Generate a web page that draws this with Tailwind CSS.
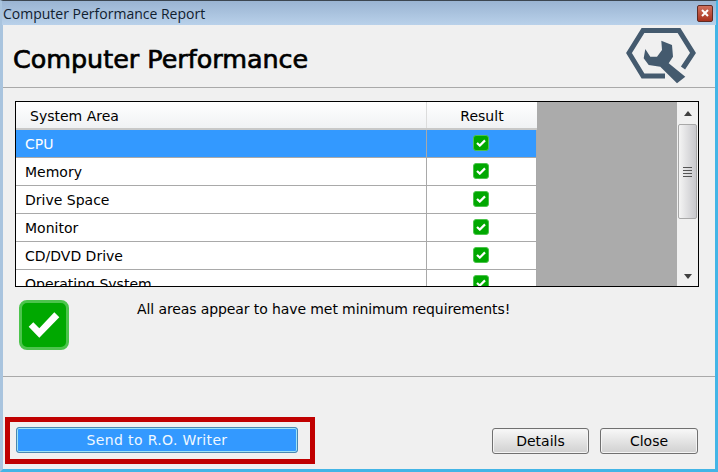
<!DOCTYPE html>
<html lang="en">
<head>
    <meta charset="UTF-8">
    <title>Computer Performance Report</title>
    <script src="https://cdn.jsdelivr.net/npm/@tailwindcss/browser@4"></script>
</head>
<body class="w-[718px] h-[472px] overflow-hidden bg-[#f0f0f0] font-['DejaVu_Sans',sans-serif] text-[14px] text-black">
    <div class="w-[718px] h-[472px] flex flex-col border-x-[3px] border-b-[3px] border-t border-t-[#3c4650] border-l-[#a9c4de] border-r-[#43b5e6] border-b-[#43b5e6]">
        <!-- Title bar -->
        <div class="h-[24px] shrink-0 -mx-[1px] flex items-center justify-between bg-gradient-to-b from-[#9ab4d2] to-[#b9d1ea] pl-[1px] pr-[3px]">
            <span class="font-['Open_Sans',sans-serif] text-[14px] text-[#10202f]">Computer Performance Report</span>
            <div class="w-[16px] h-[17px] rounded-[2px] border border-[#5e2a24] bg-gradient-to-b from-[#d0705c] to-[#a8301c] flex items-center justify-center">
                <svg width="8" height="8" viewBox="0 0 8 8"><path d="M1 1L7 7M7 1L1 7" stroke="#fff" stroke-width="2"/></svg>
            </div>
        </div>

        <!-- Header -->
        <div class="h-[63px] shrink-0 flex items-center justify-between border-b border-[#a9a9a9] pl-[10px] pr-[15px]">
            <h1 class="mt-[8px] text-[25.4px] leading-none font-medium [-webkit-text-stroke:0.7px_black]">Computer Performance</h1>
            <svg width="80" height="60" viewBox="0 0 80 60" fill="none" class="shrink-0">
                <path d="M45 50H23L9 27L23 4.5H59L73 27L63 42" stroke="#445a6e" stroke-width="5"/>
                <path d="M25.3 23L23.7 32.3L28.7 39L40.3 40.7L57 57.3L65.3 50.7L48.7 37.3L53 30.7L52 19L41.3 14.7L42 24L37 30.7H30.3Z" fill="#445a6e"/>
            </svg>
        </div>

        <!-- Table -->
        <div class="mt-[13px] ml-[12px] w-[684px] h-[186px] shrink-0 border border-black flex overflow-hidden">
            <div class="w-[521px] shrink-0 bg-white">
                <div class="h-[28px] flex border-b-2 border-[#c8c8c8] bg-gradient-to-b from-white to-[#f0f2f4]">
                    <div class="w-[411px] pl-[14px] pt-[2px] flex items-center border-r border-[#dcdcdc]">System Area</div>
                    <div class="flex-1 pt-[2px] flex items-center justify-center">Result</div>
                </div>
                <div id="rows"></div>
            </div>
            <div class="w-[140px] shrink-0 bg-[#ababab]"></div>
            <!-- Scrollbar -->
            <div class="flex-1 bg-[#f0f0f0] flex flex-col items-center">
                <div class="h-[22px] flex items-center"><div class="w-0 h-0 border-x-[4.5px] border-x-transparent border-b-[5px] border-b-[#404040]"></div></div>
                <div class="w-[19px] h-[95px] rounded-[2px] border border-[#a8a8a8] bg-gradient-to-r from-[#f4f4f4] to-[#c8c8cc] flex flex-col items-center justify-center gap-[2px]">
                    <div class="w-[9px] h-px bg-[#555]"></div>
                    <div class="w-[9px] h-px bg-[#555]"></div>
                    <div class="w-[9px] h-px bg-[#555]"></div>
                    <div class="w-[9px] h-px bg-[#555]"></div>
                </div>
                <div class="mt-auto h-[20px] flex items-center"><div class="w-0 h-0 border-x-[4.5px] border-x-transparent border-t-[5px] border-t-[#404040]"></div></div>
            </div>
        </div>

        <!-- Status message -->
        <div class="h-[90px] shrink-0 border-b border-[#a9a9a9] flex items-start pl-[16px] pt-[13px]">
            <div class="w-[50px] h-[50px] rounded-[8px] bg-[#00a800] border-[3px] border-[#4cc44c]">
                <svg width="44" height="44" viewBox="0 0 44 44"><polygon points="6.7,23.7 11.3,19.3 17.3,25.3 32.3,9.3 37.3,14.3 17.3,34.7" fill="#fff"/></svg>
            </div>
            <p class="ml-[68px] leading-[18px] tracking-[-0.1px]">All areas appear to have met minimum requirements!</p>
        </div>

        <!-- Footer -->
        <div class="flex-1 flex items-end justify-between pl-[2px] pr-[17px] pb-[5px]">
            <div class="w-[310px] h-[47px] border-[5px] border-[#c00000] pl-[6px] pt-[5px]">
                <button class="w-[282px] h-[26px] rounded-[3px] border border-[#4a86b0] shadow-[inset_0_0_0_1px_#9fe4f5] bg-[#3399ff] text-[#f0f8ff] tracking-[0.37px]">Send to R.O. Writer</button>
            </div>
            <div class="flex gap-[11px] mb-[10px]">
                <button class="w-[97px] h-[26px] rounded-[3px] border border-[#707070] shadow-[inset_0_0_0_1px_#f4f4f4] bg-gradient-to-b from-[#f8f8f8] to-[#d0d0d0]">Details</button>
                <button class="w-[98px] h-[26px] rounded-[3px] border border-[#707070] shadow-[inset_0_0_0_1px_#f4f4f4] bg-gradient-to-b from-[#f8f8f8] to-[#d0d0d0]">Close</button>
            </div>
        </div>
    </div>

    <script>
        const checkSvg = '<div class="w-[16px] h-[16px] mb-[1px] mr-[1px] rounded-[3px] bg-[#00a800] border border-[#4cc44c] flex items-center justify-center"><svg width="10" height="8" viewBox="0 0 10 8"><path d="M1 4L3.8 6.6L9 1.4" stroke="#fff" stroke-width="2.2" fill="none"/></svg></div>';
        const areas = ['CPU', 'Memory', 'Drive Space', 'Monitor', 'CD/DVD Drive', 'Operating System'];
        document.getElementById('rows').innerHTML = areas.map((name, i) => `
            <div class="h-[28px] flex border-b border-[#a9a9a9] ${i === 0 ? 'bg-[#3399ff] text-white' : ''}">
                <div class="w-[411px] pl-[9px] pt-[2px] flex items-center border-r border-[#a9a9a9]">${name}</div>
                <div class="flex-1 flex items-center justify-center border-r border-[#a9a9a9]">${checkSvg}</div>
            </div>`).join('');
    </script>
</body>
</html>
